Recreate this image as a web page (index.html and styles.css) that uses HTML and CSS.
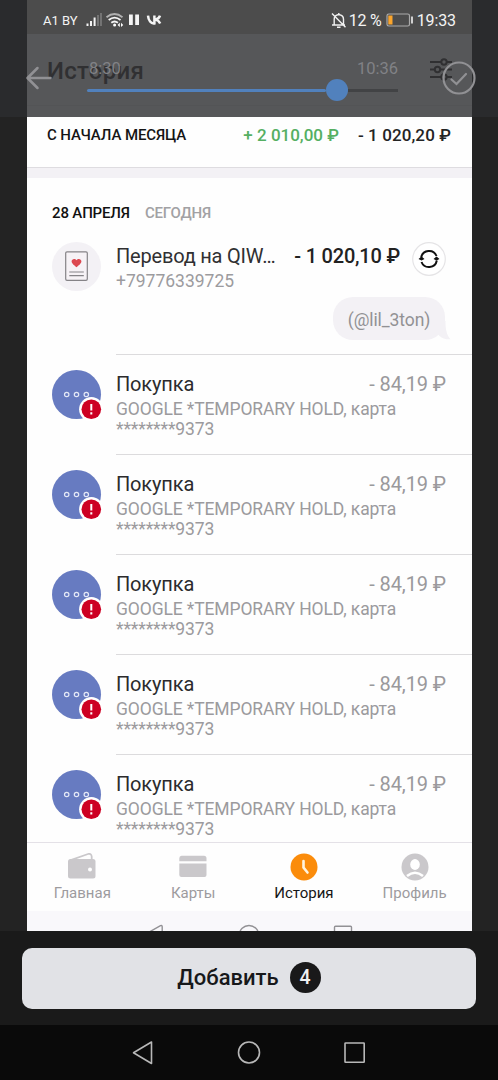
FILE: index.html
```html
<!DOCTYPE html>
<html lang="ru">
<head>
<meta charset="utf-8">
<title>История</title>
<link rel="stylesheet" href="styles.css">
</head>
<body>
<div class="screen">
  <main class="preview">
    <div class="app-header">
      <h1 class="app-title">История</h1>
      <svg class="filter-icon" width="24" height="24" viewBox="0 0 24 24" fill="none" stroke="#303032" stroke-width="2"><path d="M1 5h11M18 5h5M1 12.500h4.500M11.500 12.500H23M1 20h11M18 20h5"/><circle cx="15" cy="5" r="2.700"/><circle cx="8.500" cy="12.500" r="2.700"/><circle cx="15" cy="20" r="2.700"/></svg>
    </div>
    <div class="summary">
      <span class="summary-label">С НАЧАЛА МЕСЯЦА</span>
      <span class="income">+ 2 010,00 ₽</span>
      <span class="expense">- 1 020,20 ₽</span>
    </div>
    <div class="band"></div>
    <div class="date"><b class="date-day">28 АПРЕЛЯ</b><span class="date-rel">СЕГОДНЯ</span></div>
    <section class="transfer">
      <svg class="avatar" width="49" height="49" viewBox="0 0 49 49"><circle cx="24.500" cy="24.500" r="24.500" fill="#f3f1f5"/><rect x="13.700" y="9.800" width="21.600" height="28.500" rx="1.300" fill="#f6f2f6" stroke="#858387" stroke-width="1.200"/><path d="M24.500 25.300c-1.600-1.400-4.900-3.600-4.900-6 0-2.600 3.500-3.300 4.900-1.100 1.400-2.200 4.900-1.500 4.900 1.100 0 2.400-3.300 4.600-4.900 6z" fill="#dc4850"/><path d="M17.300 30h14.500M17.300 33.700h14.500" stroke="#858387" stroke-width="1.200"/></svg>
      <div class="transfer-text"><div class="name">Перевод на QIW…</div><div class="phone">+79776339725</div></div>
      <div class="transfer-sum">- 1 020,10 ₽</div>
      <svg class="repeat" width="34" height="34" viewBox="0 0 34 34" fill="none"><circle cx="17" cy="17" r="16.300" fill="#fff" stroke="#e5e4e6" stroke-width="1.200"/><path d="M9.200 15.500A8 8 0 0 1 24.500 14M24.800 18.500A8 8 0 0 1 9.500 20" stroke="#111" stroke-width="2"/><path d="M6.500 17l3-2.500 3 2.500-3 1.500zM21.500 17l3-2.500 3 2.500-3 1.500z" fill="#111"/></svg>
    </section>
    <div class="comment-row"><span class="comment">(@lil_3ton)<svg class="tail" width="19" height="19" viewBox="0 0 19 19"><path d="M13.500 0c0 8 1 14 5 18.300-5 .2-8-.8-11-3.300L0 5z" fill="#f3f1f5"/></svg></span></div>
    <div class="purchases">
      <article class="purchase"><svg class="avatar" width="51" height="51" viewBox="0 0 51 51"><use href="#purchase-icon"/></svg><div class="purchase-body"><div class="purchase-top"><span class="purchase-name">Покупка</span><span class="price">- 84,19 ₽</span></div><div class="details">GOOGLE *TEMPORARY HOLD, карта<br>********9373</div></div></article>
      <article class="purchase"><svg class="avatar" width="51" height="51" viewBox="0 0 51 51"><use href="#purchase-icon"/></svg><div class="purchase-body"><div class="purchase-top"><span class="purchase-name">Покупка</span><span class="price">- 84,19 ₽</span></div><div class="details">GOOGLE *TEMPORARY HOLD, карта<br>********9373</div></div></article>
      <article class="purchase"><svg class="avatar" width="51" height="51" viewBox="0 0 51 51"><use href="#purchase-icon"/></svg><div class="purchase-body"><div class="purchase-top"><span class="purchase-name">Покупка</span><span class="price">- 84,19 ₽</span></div><div class="details">GOOGLE *TEMPORARY HOLD, карта<br>********9373</div></div></article>
      <article class="purchase"><svg class="avatar" width="51" height="51" viewBox="0 0 51 51"><use href="#purchase-icon"/></svg><div class="purchase-body"><div class="purchase-top"><span class="purchase-name">Покупка</span><span class="price">- 84,19 ₽</span></div><div class="details">GOOGLE *TEMPORARY HOLD, карта<br>********9373</div></div></article>
      <article class="purchase"><svg class="avatar" width="51" height="51" viewBox="0 0 51 51"><use href="#purchase-icon"/></svg><div class="purchase-body"><div class="purchase-top"><span class="purchase-name">Покупка</span><span class="price">- 84,19 ₽</span></div><div class="details">GOOGLE *TEMPORARY HOLD, карта<br>********9373</div></div></article>
    </div>
    <nav class="tabs">
      <div class="tab"><svg width="28" height="28" viewBox="0 0 28 28"><path d="M2 7.300L20 1Q23.300.2 23.700 3.500V7" fill="none" stroke="#cac8cb" stroke-width="1.800"/><path fill="#cac8cb" d="M2.500 6h22.500q2.500 0 2.500 2.500V23q0 2.500-2.500 2.500H2.500Q0 25.500 0 23V8.500Q0 6 2.500 6z"/><circle cx="22" cy="16.500" r="2" fill="#fff"/></svg><span>Главная</span></div>
      <div class="tab"><svg width="28" height="28" viewBox="0 0 28 28"><path fill="#cac8cb" d="M2.500 2.800h22.500q2.500 0 2.500 2.500V8.300H.3V5.300Q.3 2.800 2.500 2.800zM.3 10.500h27.200v11.500q0 2-2 2h-23Q.3 24 .3 22z"/></svg><span>Карты</span></div>
      <div class="tab tab-active"><svg width="28" height="28" viewBox="0 0 28 28"><circle cx="14" cy="14" r="13.500" fill="#fb8c0b"/><path d="M13.500 8v6.500l4 5" fill="none" stroke="#fff4df" stroke-width="2.600" stroke-linecap="round"/></svg><span>История</span></div>
      <div class="tab"><svg width="28" height="28" viewBox="0 0 28 28"><circle cx="14" cy="14" r="13.500" fill="#cac8cb"/><ellipse cx="14" cy="11.500" rx="4.800" ry="5.400" fill="#fff"/><path d="M6 23Q14 16.500 22 23" fill="none" stroke="#fff" stroke-width="2.600"/></svg><span>Профиль</span></div>
    </nav>
    <svg class="inner-nav" width="445" height="20" viewBox="27 911 445 20" fill="none" stroke="#929195" stroke-width="1.400"><path d="M143 935.500l17.500-9.800q1.700-.7 1.700 1v12"/><circle cx="249" cy="935.200" r="9.700"/><rect x="334.500" y="926.200" width="17" height="17" rx="1"/></svg>
  </main>

  <header class="toolbar">
    <div class="status">
      <span class="carrier">A1 BY</span>
      <svg class="signals" width="76" height="18" viewBox="86 11 76 18"><path d="M87.500 26v-2.500M91 26v-5M94.600 26v-8.500" stroke="#f4f4f4" stroke-width="2"/><path d="M98 26V15M101 26V13" stroke="#858585" stroke-width="1.400"/><g fill="none" stroke="#f4f4f4" stroke-width="1.800"><path d="M106.500 17.200q8-6.500 16 0" opacity=".6"/><path d="M108.700 20q5.900-4.700 11.800 0M111.300 22.800q3.300-2.700 6.600 0"/></g><circle cx="114.600" cy="25" r="1.500" fill="#fff"/><path d="M119.800 22.700l-2.200 2.300 2.200 2zM121 22.700l2.200 2.300-2.200 2z" fill="#fff"/><path d="M129 14.500h3.800v10.500H129zM135.200 14.500h3.800v10.500h-3.800z" fill="#f5f5f5"/><path d="M148 15.600c.4 5 3 8.300 6.400 7.800v-7.800M160 15.600q-1 3.200-4.600 4 3.300.7 4.800 4" fill="none" stroke="#f5f5f5" stroke-width="2.500"/></svg>
      <svg class="mute" width="16" height="17" viewBox="0 0 16 17" fill="none" stroke="#f1f1f1" stroke-width="1.400"><path d="M3.200 12.500V7.200q0-4 4.500-4.700 4.800.7 4.800 4.700v5.300M1 13h13M7.800 1v1.500M6 15.300h3.500M1 1.500l13.500 13.800"/></svg>
      <span class="percent">12 %</span>
      <svg class="battery" width="28" height="14" viewBox="0 0 28 14" fill="none"><rect x="1" y="1" width="22.500" height="12" rx="1.800" stroke="#aaa" stroke-width="1.200"/><path d="M2.300 2.500H6.500v9H2.300z" fill="#fba52b"/><path d="M26 3.500v7" stroke="#e8e8e8" stroke-width="1.700"/></svg>
      <span class="clock">19:33</span>
    </div>
    <div class="editor">
      <svg class="back" width="27" height="26" viewBox="0 0 27 26" fill="none" stroke="#919194" stroke-width="2.500" stroke-linecap="round" stroke-linejoin="round"><path d="M12.500 3L2.500 13l10 10M3 13h22.500"/></svg>
      <div class="slider">
        <div class="times"><span>8:30</span><span>10:36</span></div>
        <div class="track"><div class="played"></div><div class="thumb"></div><div class="rest"></div></div>
      </div>
      <svg class="confirm" width="34" height="34" viewBox="0 0 34 34" fill="none" stroke="#919194" stroke-width="2.200" stroke-linecap="round"><circle cx="17" cy="17" r="15.500"/><path d="M9.500 18.500l5 4.500 9.500-10"/></svg>
    </div>
  </header>

  <footer class="footer">
    <button class="add">Добавить <span class="count">4</span></button>
  </footer>
  <div class="system-nav">
    <svg width="498" height="55" viewBox="0 1025 498 55" fill="none" stroke="#b8b8b8" stroke-width="1.600" stroke-linejoin="round"><path d="M133.500 1052.800L151.500 1042v21.500z"/><circle cx="249" cy="1052.500" r="10.500"/><rect x="345" y="1043" width="19.200" height="19.200" rx=".5"/></svg>
  </div>
</div>
<svg class="defs" width="0" height="0"><defs><g id="purchase-icon"><circle cx="24.500" cy="24.500" r="24.500" fill="#677bc1"/><g fill="none" stroke="#e4e8f6" stroke-width="1.200"><circle cx="14.700" cy="24.500" r="2.200"/><circle cx="24.500" cy="24.500" r="2.200"/><circle cx="34.300" cy="24.500" r="2.200"/></g><circle cx="39.300" cy="39.300" r="12.200" fill="#fff"/><circle cx="39.300" cy="39.300" r="9.800" fill="#cd0023"/><path d="M39.300 34v6.500M39.300 42.200v2.200" stroke="#fff" stroke-width="2"/></g></defs></svg>
</body>
</html>
```
FILE: styles.css
```css
* { box-sizing: border-box; }
body { margin: 0; background: #1a1a1a; font-family: Roboto, sans-serif; }
svg { display: block; flex: none; }
.defs { position: absolute; }
.screen { position: relative; width: 498px; height: 1080px; background: linear-gradient(#2a2b2d 117px, #232323 117px); overflow: hidden; }
.preview { width: 445px; height: 931px; margin: 0 auto 0 27px; background: #fefefe; display: flex; flex-direction: column; }
.app-header { height: 117px; flex: none; display: flex; justify-content: space-between; align-items: flex-start; padding: 57px 19px 0 20px; background: linear-gradient(#4c4c4c 34px, #565759 34px, #565759 105px, #535456 105px, #535456 106px, #565759 106px); }
.app-title { margin: 0; font-size: 24px; line-height: 28px; font-weight: 500; color: #303032; letter-spacing: .3px; }
.summary { height: 51px; flex: none; display: flex; align-items: center; padding: 0 21px 14px 20px; border-bottom: 1px solid #dedce0; font-weight: 500; white-space: pre; }
.summary-label { font-size: 15px; color: #151515; margin-right: auto; letter-spacing: -.1px; }
.income, .expense { font-size: 17px; }
.income { color: #55af62; margin-right: 19px; }
.expense { color: #242424; letter-spacing: .1px; }
.band { height: 10px; flex: none; background: #f3f1f5; }
.date { height: 64px; flex: none; padding: 25px 0 0 25px; display: flex; gap: 15px; font-size: 15px; line-height: 20px; font-weight: 500; letter-spacing: -.15px; }
.date-day { font-weight: 500; color: #111; }
.date-rel { color: #a2a1a4; }
.transfer { height: 55px; flex: none; display: flex; padding-left: 25px; }
.transfer-text { margin-left: 15px; width: 164px; white-space: nowrap; }
.name { font-size: 20px; line-height: 28px; color: #303032; letter-spacing: -.2px; }
.phone { font-size: 17.5px; line-height: 22px; color: #9c9b9e; }
.transfer-sum { width: 120px; text-align: right; font-size: 20px; line-height: 28px; font-weight: 500; color: #222; white-space: nowrap; letter-spacing: -.2px; }
.repeat { margin-left: 12px; }
.comment-row { height: 57px; flex: none; display: flex; justify-content: flex-end; padding-right: 27px; }
.comment { position: relative; width: 112px; height: 43px; border-radius: 20px; background: #f3f1f5; text-align: center; color: #929194; font-size: 17.5px; line-height: 46px; letter-spacing: -.1px; }
.tail { position: absolute; right: -6px; bottom: 0; }
.purchases { height: 488px; flex: none; overflow: hidden; }
.purchase { height: 100px; display: flex; padding: 16px 0 0 25px; }
.purchase-body { margin: -16px 0 0 13px; flex: 1; border-top: 1px solid #dcdbdd; padding: 16px 26px 0 0; }
.purchase-top { display: flex; justify-content: space-between; font-size: 20px; line-height: 26px; }
.purchase-name { color: #2b2b2d; letter-spacing: -.15px; }
.price { color: #9a999c; letter-spacing: -.1px; }
.details { font-size: 17.5px; line-height: 20px; margin-top: 2px; color: #9b9a9d; white-space: nowrap; letter-spacing: -.12px; }
.tabs { height: 69px; flex: none; border-top: 1px solid #e4e1e7; display: grid; grid-template-columns: repeat(4, 1fr); background: #fefefe; padding-right: 2px; }
.tab { display: flex; flex-direction: column; align-items: center; padding-top: 10px; font-size: 15px; line-height: 20px; gap: 2px; color: #9d9b9e; }
.tab-active { color: #151515; }
.inner-nav { background: #f9f8fb; }
.toolbar { position: absolute; inset: 0 0 auto; height: 117px; }
.status { height: 40px; display: flex; align-items: center; color: #f4f4f4; padding: 0 42px 0 43px; white-space: nowrap; }
.carrier { font-size: 13px; width: 43px; }
.signals { margin-right: auto; }
.mute { margin-right: 2px; }
.percent { font-size: 16px; margin-right: 4px; letter-spacing: -.2px; }
.battery { margin-right: 3px; }
.clock { font-size: 16px; letter-spacing: -.1px; }
.editor { display: flex; align-items: center; height: 76px; padding: 0 22px 0 25px; }
.back { margin-right: 35px; }
.slider { width: 311px; height: 41px; }
.times { display: flex; justify-content: space-between; font-size: 16.5px; line-height: 22px; color: #818286; padding-left: 2px; }
.track { display: flex; align-items: center; height: 21px; }
.played { width: 239px; height: 3px; background: #5181bd; border-radius: 2px; }
.thumb { width: 22px; height: 22px; border-radius: 50%; background: #5181bd; }
.rest { flex: 1; height: 3px; background: #424345; }
.confirm { margin-left: auto; }
.footer { height: 94px; padding: 17px 22px; background: #1a1a1a; }
.add { width: 454px; height: 61px; border: 0; border-radius: 10px; background: #e1e2e6; color: #17181a; font: 500 22px Roboto, sans-serif; display: flex; align-items: center; justify-content: center; gap: 11px; padding: 0 0 2px; }
.count { width: 31px; height: 31px; border-radius: 50%; background: #19191a; color: #f0f0f2; font-size: 19.5px; line-height: 31px; text-align: center; }
.system-nav { height: 55px; background: #0a0a0a; }
```
